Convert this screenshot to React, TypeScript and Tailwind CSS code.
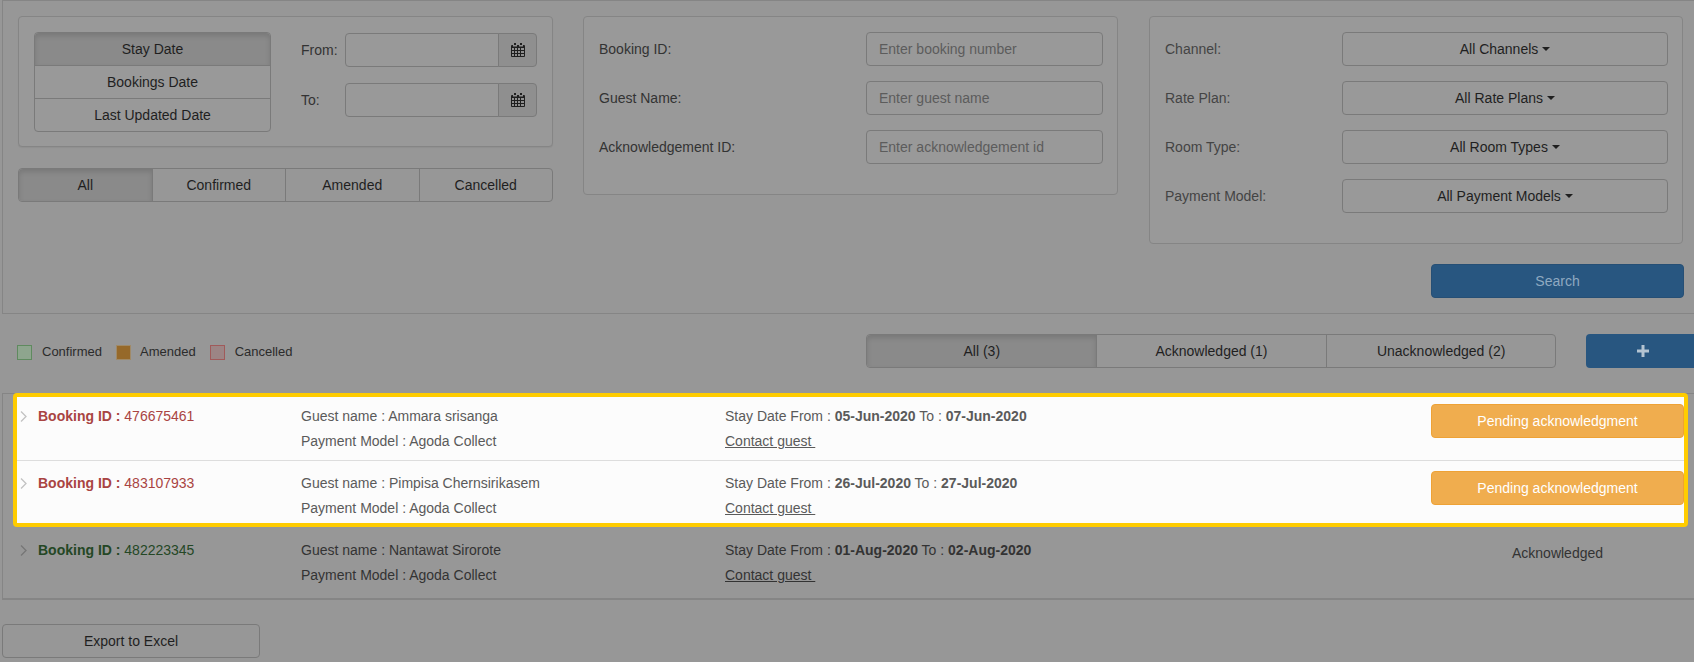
import React from 'react';

const font = "font-['Liberation_Sans',Arial,sans-serif]";

const CalendarIcon = () => (
    <svg width="14" height="14" viewBox="0 0 14 14" className="text-[#1f1f1f]" fill="currentColor">
        <path d="M3 0h2v2H3zM9 0h2v2H9z" />
        <path fillRule="evenodd" d="M1 2h1v1.5h4V2h2v1.5h4V2h1a1 1 0 0 1 1 1v10a1 1 0 0 1-1 1H1a1 1 0 0 1-1-1V3a1 1 0 0 1 1-1zM1 5v2h2V5zm3 0v2h2V5zm3 0v2h2V5zm3 0v2h3V5zM1 8v2h2V8zm3 0v2h2V8zm3 0v2h2V8zm3 0v2h3V8zM1 11v2h2v-2zm3 0v2h2v-2zm3 0v2h2v-2zm3 0v2h3v-2z" />
    </svg>
);

const Chevron = ({ color }: { color: string }) => (
    <svg width="7" height="11" viewBox="0 0 7 11" fill="none" stroke={color} strokeWidth="1.3" className="shrink-0">
        <path d="M1 0.5l5 5-5 5" />
    </svg>
);

const PlusIcon = () => (
    <svg width="12" height="12" viewBox="0 0 12 12" fill="#b4c4d2">
        <path d="M4.5 0h3v4.5H12v3H7.5V12h-3V7.5H0v-3h4.5z" />
    </svg>
);

const Caret = () => <span className="inline-block ml-[4px] align-middle border-x-4 border-t-4 border-x-transparent border-t-[#1f1f1f]" />;

const DateRow = ({ label }: { label: string }) => (
    <div className="flex items-center h-[34px]">
        <span className="w-[44px] text-[#333]">{label}</span>
        <div className="w-[154px] h-[34px] bg-[#999999] border border-[#7a7a7a] rounded-l" />
        <div className="w-[39px] h-[34px] -ml-px bg-[#8f8f8f] border border-[#7a7a7a] rounded-r flex items-center justify-center">
            <CalendarIcon />
        </div>
    </div>
);

const Segmented = ({ items, className }: { items: string[]; className: string }) => (
    <div className={`flex h-[34px] border border-[#7a7a7a] rounded ${className}`}>
        {items.map((item, i) => (
            <div
                key={item}
                className={`flex-1 flex items-center justify-center text-[#1f1f1f] ${i > 0 ? 'border-l border-[#7a7a7a]' : ''} ${i === 0 ? 'bg-[#8a8a8a] rounded-l shadow-[inset_0_3px_5px_rgba(0,0,0,0.125)]' : ''}`}
            >
                {item}
            </div>
        ))}
    </div>
);

const bookings = [
    { id: '476675461', guest: 'Ammara srisanga', from: '05-Jun-2020', to: '07-Jun-2020' },
    { id: '483107933', guest: 'Pimpisa Chernsirikasem', from: '26-Jul-2020', to: '27-Jul-2020' },
];

const PendingRow = ({ booking, divided }: { booking: typeof bookings[number]; divided: boolean }) => (
    <div className={`flex h-[63px] bg-[#fcfcfc] text-[#5a5a5a] ${divided ? 'border-t border-[#dddddd] pt-[12px]' : 'pt-[9px]'}`}>
        <div className="w-[21px] pl-[3px] pt-[5px] shrink-0"><Chevron color="#c2c2c2" /></div>
        <div className="w-[263px] shrink-0 text-[#a94442]"><b>Booking ID : </b>{booking.id}</div>
        <div className="w-[424px] shrink-0">
            <div>Guest name : {booking.guest}</div>
            <div className="mt-[5px]">Payment Model : Agoda Collect</div>
        </div>
        <div className="flex-1">
            <div>Stay Date From : <b>{booking.from}</b> To : <b>{booking.to}</b></div>
            <div className="mt-[5px]"><span className="underline">Contact guest&nbsp;</span></div>
        </div>
        <div className="w-[253px] shrink-0 -mt-[2px]">
            <div className="h-[34px] rounded bg-[#f0ad4e] border border-[#eea236] text-white flex items-center justify-center">Pending acknowledgment</div>
        </div>
    </div>
);

export default function App() {
    return (
        <div className={`${font} w-[1694px] h-[662px] overflow-hidden bg-[#979797] text-[14px] leading-[20px] text-[#333]`}>
            <div className="ml-[2px] h-[314px] border-l border-b border-t border-[#858585] pt-[15px] pl-[15px]">
                <div className="flex">
                    <div className="w-[535px] shrink-0">
                        <div className="h-[131px] border border-[#858585] rounded bg-[#999999] pt-[15px] pl-[15px] flex shadow-[0_1px_1px_rgba(0,0,0,0.05)]">
                            <div className="w-[237px] h-[100px] border border-[#7a7a7a] rounded text-[#1f1f1f]">
                                <div className="h-[33px] bg-[#8a8a8a] rounded-t flex items-center justify-center border-b border-[#7a7a7a] shadow-[inset_0_3px_5px_rgba(0,0,0,0.125)]">Stay Date</div>
                                <div className="h-[33px] flex items-center justify-center border-b border-[#7a7a7a]">Bookings Date</div>
                                <div className="h-[32px] flex items-center justify-center">Last Updated Date</div>
                            </div>
                            <div className="ml-[30px] pt-px flex flex-col gap-[16px]">
                                <DateRow label="From:" />
                                <DateRow label="To:" />
                            </div>
                        </div>
                        <Segmented className="mt-[21px]" items={['All', 'Confirmed', 'Amended', 'Cancelled']} />
                    </div>
                    <div className="ml-[30px] w-[535px] h-[179px] shrink-0 border border-[#858585] rounded bg-[#999999] pt-[15px] pl-[15px] pr-[14px] flex flex-col gap-[15px]">
                        {[['Booking ID:', 'Enter booking number'], ['Guest Name:', 'Enter guest name'], ['Acknowledgement ID:', 'Enter acknowledgement id']].map(([label, hint]) => (
                            <div key={label} className="flex items-center justify-between h-[34px]">
                                <span>{label}</span>
                                <div className="w-[237px] h-[34px] border border-[#7a7a7a] rounded pl-[12px] flex items-center text-[#5c5c5c]">{hint}</div>
                            </div>
                        ))}
                    </div>
                    <div className="ml-[31px] w-[534px] h-[228px] shrink-0 border border-[#858585] rounded bg-[#999999] pt-[15px] pl-[15px] pr-[14px] flex flex-col gap-[15px]">
                        {[['Channel:', 'All Channels'], ['Rate Plan:', 'All Rate Plans'], ['Room Type:', 'All Room Types'], ['Payment Model:', 'All Payment Models']].map(([label, value]) => (
                            <div key={label} className="flex items-center justify-between h-[34px]">
                                <span className="text-[#444]">{label}</span>
                                <div className="w-[326px] h-[34px] border border-[#7a7a7a] rounded flex items-center justify-center text-[#1f1f1f]">
                                    {value}<Caret />
                                </div>
                            </div>
                        ))}
                    </div>
                </div>
                <div className="flex justify-end pr-[10px] mt-[20px]">
                    <div className="w-[253px] h-[34px] rounded bg-[#285680] border border-[#264f75] text-[#8fa9c0] flex items-center justify-center">Search</div>
                </div>
            </div>

            <div className="flex items-center h-[34px] mt-[20px] pl-[17px]">
                <div className="flex items-center mt-[2px] text-[13px] text-[#2b2b2b]">
                    <span className="w-[15px] h-[15px] bg-[#8ea58e] border border-[#5f8a5f]" />
                    <span className="ml-[10px]">Confirmed</span>
                    <span className="ml-[14px] w-[15px] h-[15px] bg-[#96692a] border border-[#a08a68]" />
                    <span className="ml-[9px]">Amended</span>
                    <span className="ml-[14px] w-[15px] h-[15px] bg-[#9c8585] border border-[#a05a5a]" />
                    <span className="ml-[10px]">Cancelled</span>
                </div>
                <Segmented className="ml-[574px] w-[690px]" items={['All (3)', 'Acknowledged (1)', 'Unacknowledged (2)']} />
                <div className="ml-[30px] flex-1 h-[34px] rounded-l bg-[#285680] flex items-center pl-[51px]"><PlusIcon /></div>
            </div>

            <div className="mt-[25px] ml-[2px] h-[207px] border-l border-t border-b-2 border-[#858585]">
                <div className="ml-[10px] mr-[6px] -mt-px border-4 border-[#ffcc00] rounded">
                    {bookings.map((b, i) => <PendingRow key={b.id} booking={b} divided={i > 0} />)}
                </div>
                <div className="flex h-[71px] pl-[14px] pt-[13px] text-[#333]">
                    <div className="w-[21px] pl-[3px] pt-[5px] shrink-0"><Chevron color="#767676" /></div>
                    <div className="w-[263px] shrink-0 text-[#244725]"><b>Booking ID : </b>482223345</div>
                    <div className="w-[424px] shrink-0">
                        <div>Guest name : Nantawat Sirorote</div>
                        <div className="mt-[5px]">Payment Model : Agoda Collect</div>
                    </div>
                    <div className="w-[706px] shrink-0">
                        <div>Stay Date From : <b>01-Aug-2020</b> To : <b>02-Aug-2020</b></div>
                        <div className="mt-[5px]"><span className="underline">Contact guest&nbsp;</span></div>
                    </div>
                    <div className="w-[253px] shrink-0 pt-[3px] text-center">Acknowledged</div>
                </div>
            </div>

            <div className="ml-[2px] mt-[24px] w-[258px] h-[34px] border border-[#7a7a7a] rounded flex items-center justify-center text-[#1f1f1f]">Export to Excel</div>
        </div>
    );
}
